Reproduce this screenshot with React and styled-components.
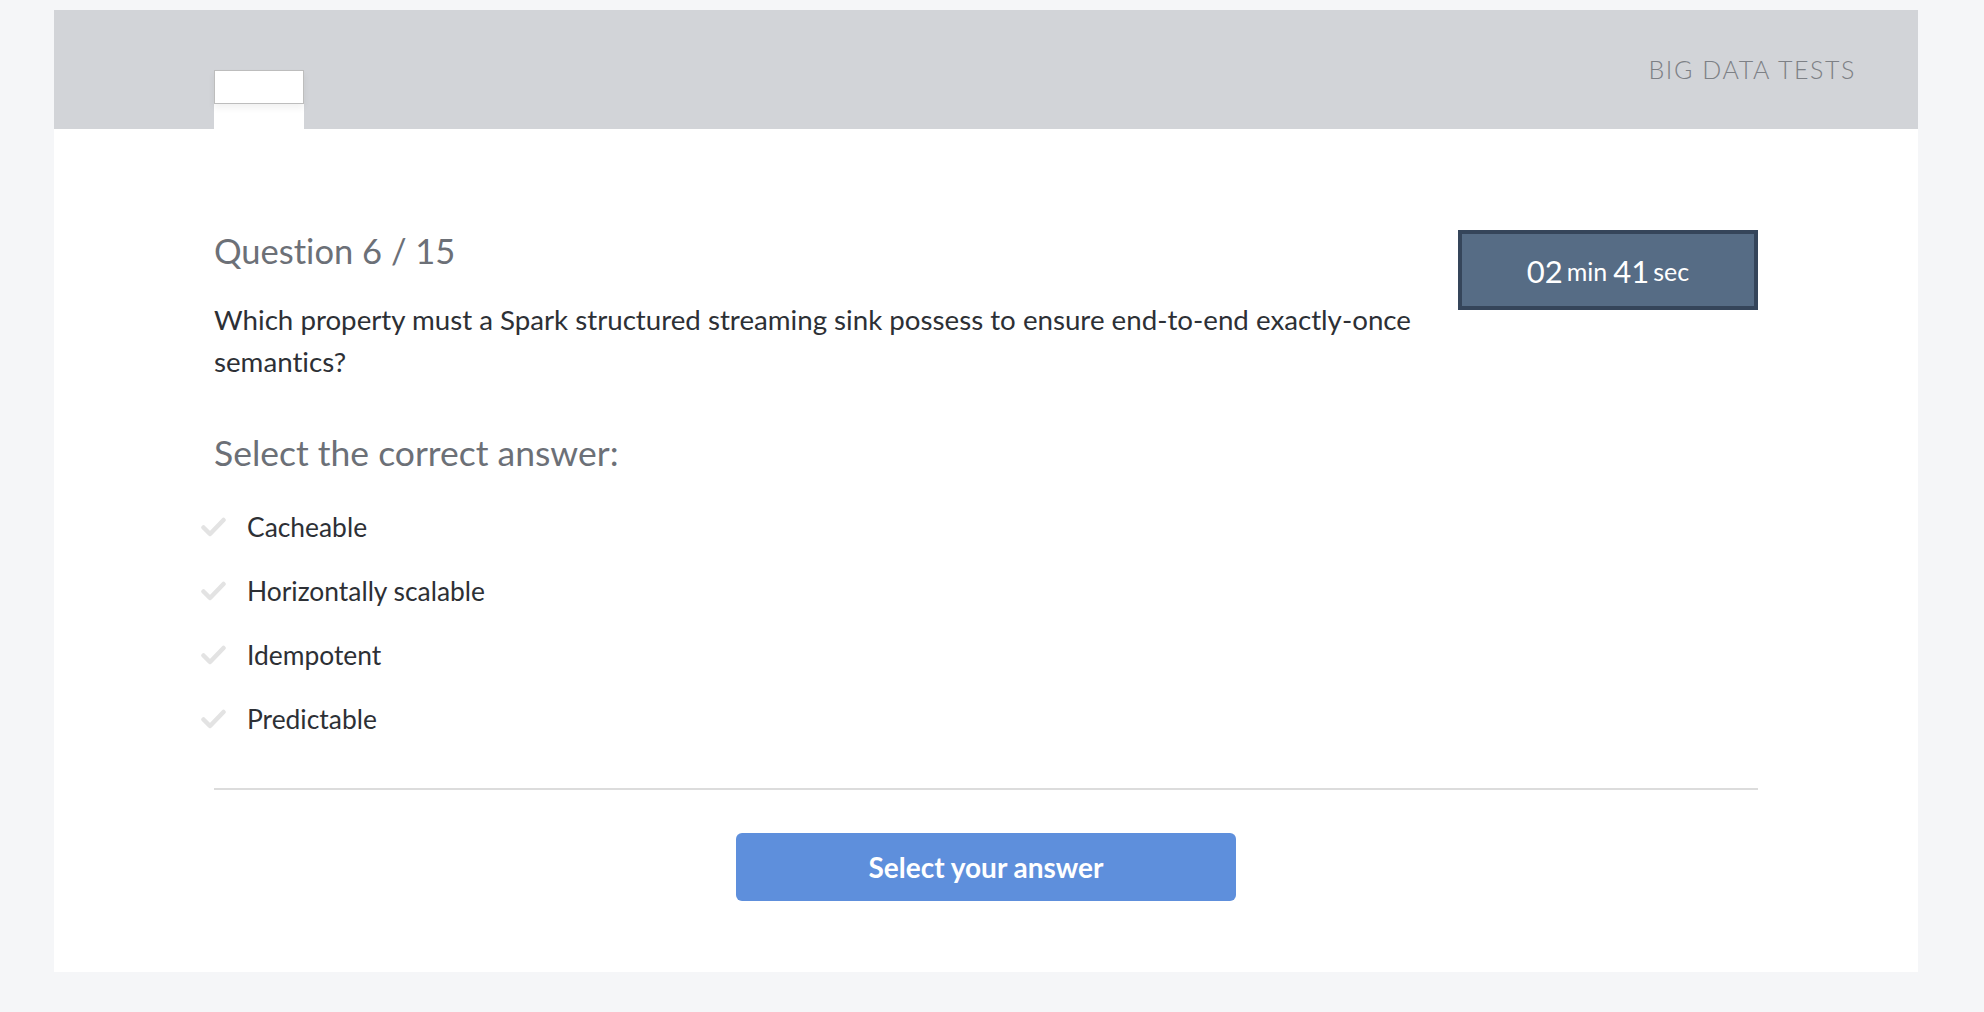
import React from "react";
import styled, { createGlobalStyle } from "styled-components";

const GlobalStyle = createGlobalStyle`
  body {
    margin: 0;
    background: #f5f6f8;
    font-family: Lato, "Open Sans", sans-serif;
    font-variant-ligatures: none;
  }
`;

const Page = styled.div`
  padding: 10px 66px 39px 54px;
`;

const Card = styled.div`
  background: #fff;
`;

const Header = styled.header`
  height: 119px;
  background: #d2d4d8;
  display: flex;
  align-items: flex-start;
  padding: 0 62px 0 160px;
`;

const Tab = styled.div`
  width: 90px;
  height: 59px;
  margin-top: 60px;
  background: #fff;
`;

const LogoBox = styled.div`
  height: 32px;
  border: 1px solid #bdbdbd;
  background: #fff;
  box-shadow: 0 4px 7px rgba(0, 0, 0, 0.06);
`;

const Brand = styled.div`
  margin-left: auto;
  padding-top: 44px;
  font-size: 25px;
  line-height: 1.2;
  font-weight: 300;
  letter-spacing: 1.6px;
  color: #7d8085;
`;

const Body = styled.main`
  padding: 101px 160px 71px;
`;

const QuestionRow = styled.div`
  display: flex;
  align-items: flex-start;
`;

const QuestionInfo = styled.div`
  flex: 1;
  padding-right: 20px;
`;

const Counter = styled.h2`
  margin: 0;
  font-size: 34.5px;
  line-height: 42px;
  font-weight: 400;
  color: #6c7077;
`;

const QuestionText = styled.p`
  margin: 27px 0 0;
  font-size: 27.7px;
  line-height: 42px;
  color: #2d3035;
`;

const Timer = styled.div`
  width: 300px;
  height: 80px;
  box-sizing: border-box;
  border: 4px solid #35455a;
  background: #566c85;
  color: #fff;
  display: flex;
  align-items: center;
  justify-content: center;
  padding-top: 2px;
`;

const TimeValue = styled.span`
  font-size: 31px;
`;

const TimeUnit = styled.span`
  font-size: 25px;
  margin: 0 6px 0 4px;
  &:last-child {
    margin-right: 0;
  }
`;

const SelectLabel = styled.h3`
  margin: 50px 0 0;
  font-size: 35.5px;
  line-height: 40px;
  font-weight: 400;
  color: #6c7077;
`;

const Answers = styled.ul`
  list-style: none;
  margin: 38px 0 0 -13px;
  padding: 0;
  display: flex;
  flex-direction: column;
  gap: 32px;
`;

const Answer = styled.li`
  display: flex;
  align-items: center;
  gap: 21px;
  font-size: 26.4px;
  line-height: 32px;
  color: #2d3035;
  cursor: pointer;
`;

const Check = styled.svg`
  width: 25px;
  height: 20px;
  flex-shrink: 0;
`;

const Divider = styled.hr`
  margin: 53px 0 0;
  border: none;
  height: 2px;
  background: #dcdcdc;
`;

const Footer = styled.div`
  display: flex;
  justify-content: center;
  margin-top: 43px;
`;

const SubmitButton = styled.button`
  width: 500px;
  height: 68px;
  border: none;
  border-radius: 6px;
  background: #5e8fdc;
  color: #fff;
  font-family: inherit;
  font-size: 28px;
  font-weight: 700;
  cursor: pointer;
`;

const answers = ["Cacheable", "Horizontally scalable", "Idempotent", "Predictable"];

const CheckIcon = () => (
  <Check viewBox="0 0 25 20">
    <path
      d="M2.5 10.5 L9 17 L22.5 3"
      fill="none"
      stroke="#e3e3e3"
      strokeWidth="4.5"
      strokeLinecap="round"
      strokeLinejoin="round"
    />
  </Check>
);

export default function App() {
  return (
    <Page>
      <GlobalStyle />
      <Card>
        <Header>
          <Tab>
            <LogoBox />
          </Tab>
          <Brand>BIG DATA TESTS</Brand>
        </Header>
        <Body>
          <QuestionRow>
            <QuestionInfo>
              <Counter>Question 6 / 15</Counter>
              <QuestionText>
                Which property must a Spark structured streaming sink possess to ensure
                end-to-end exactly-once semantics?
              </QuestionText>
            </QuestionInfo>
            <Timer>
              <TimeValue>02</TimeValue>
              <TimeUnit>min</TimeUnit>
              <TimeValue>41</TimeValue>
              <TimeUnit>sec</TimeUnit>
            </Timer>
          </QuestionRow>
          <SelectLabel>Select the correct answer:</SelectLabel>
          <Answers>
            {answers.map(a => (
              <Answer key={a}>
                <CheckIcon />
                {a}
              </Answer>
            ))}
          </Answers>
          <Divider />
          <Footer>
            <SubmitButton>Select your answer</SubmitButton>
          </Footer>
        </Body>
      </Card>
    </Page>
  );
}
